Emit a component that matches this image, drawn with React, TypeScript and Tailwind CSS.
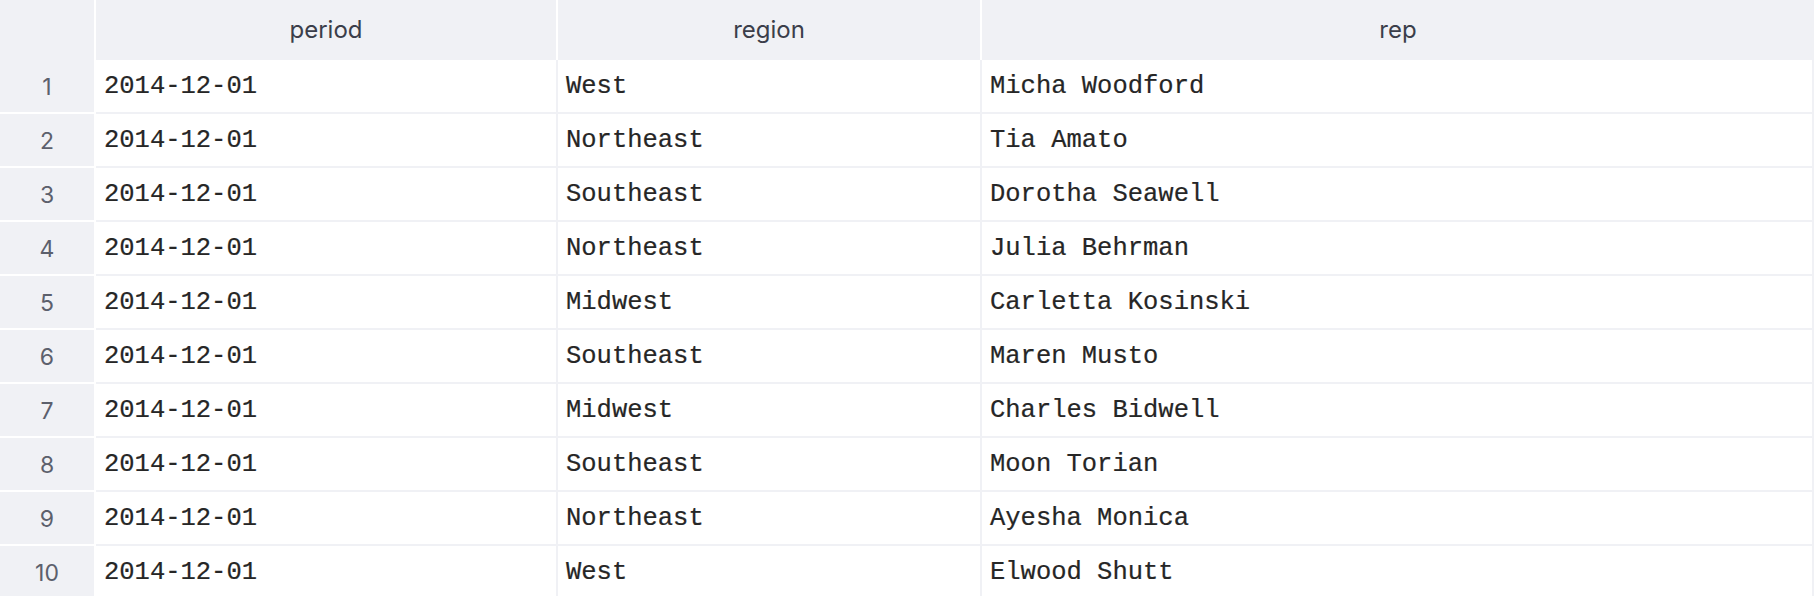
const rows = [
  { period: '2014-12-01', region: 'West', rep: 'Micha Woodford' },
  { period: '2014-12-01', region: 'Northeast', rep: 'Tia Amato' },
  { period: '2014-12-01', region: 'Southeast', rep: 'Dorotha Seawell' },
  { period: '2014-12-01', region: 'Northeast', rep: 'Julia Behrman' },
  { period: '2014-12-01', region: 'Midwest', rep: 'Carletta Kosinski' },
  { period: '2014-12-01', region: 'Southeast', rep: 'Maren Musto' },
  { period: '2014-12-01', region: 'Midwest', rep: 'Charles Bidwell' },
  { period: '2014-12-01', region: 'Southeast', rep: 'Moon Torian' },
  { period: '2014-12-01', region: 'Northeast', rep: 'Ayesha Monica' },
  { period: '2014-12-01', region: 'West', rep: 'Elwood Shutt' },
];

const columns = [
  { key: 'period', width: 'w-[462px]' },
  { key: 'region', width: 'w-[424px]' },
  { key: 'rep', width: 'flex-1' },
] as const;

const App = () => {
  return (
    <div className="w-[1814px] h-[596px] overflow-hidden bg-white">
      <div className="flex h-[60px] font-['Inter',sans-serif] text-[24px] text-[#3b3e4a]">
        <div className="w-[96px] bg-[#f0f1f5] border-r-2 border-white" />
        {columns.map((col, i) => (
          <div
            key={col.key}
            className={`${col.width} flex items-center justify-center bg-[#f0f1f5] ${i < columns.length - 1 ? 'border-r-2 border-white' : ''}`}
          >
            {col.key}
          </div>
        ))}
      </div>

      {rows.map((row, idx) => (
        <div key={idx} className="flex h-[54px]">
          <div className="w-[96px] flex items-center justify-center pt-[2px] bg-[#f0f1f5] border-r-2 border-b-2 border-white font-['Inter',sans-serif] text-[23px] text-[#5c606c]">
            {idx + 1}
          </div>
          {columns.map((col) => (
            <div
              key={col.key}
              className={`${col.width} flex items-center pl-[8px] pt-[2px] border-r-2 border-b-2 border-[#f0f1f5] font-['Liberation_Mono',monospace] text-[25.5px] text-[#262626] [-webkit-text-stroke:0.2px_#262626]`}
            >
              {row[col.key]}
            </div>
          ))}
        </div>
      ))}
    </div>
  );
};

export default App;
